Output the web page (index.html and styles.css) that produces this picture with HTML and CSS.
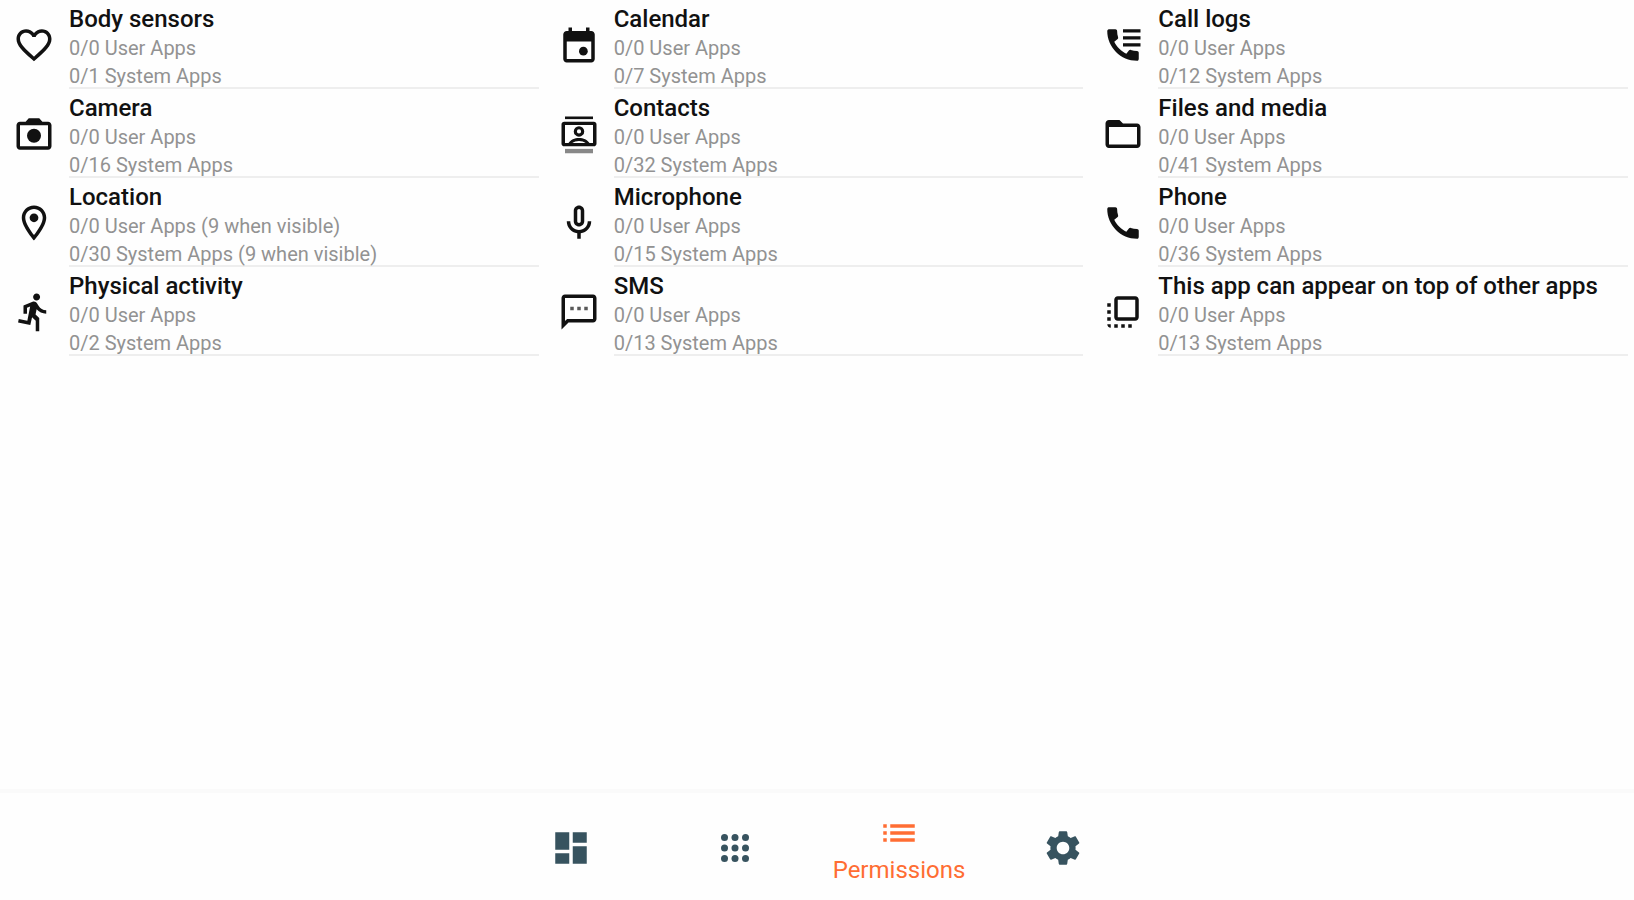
FILE: index.html
```
<!DOCTYPE html>
<html lang="en">
<head>
  <meta charset="UTF-8">
  <title>Permissions</title>
  <meta name="viewport" content="width=device-width, initial-scale=1.0">
  <link rel="stylesheet" href="styles.css">
</head>
<body>
  <main>
    <ul class="permissions">
      <li class="permission">
        <svg class="icon" viewBox="0 0 24 24"><path d="M16.5 3c-1.74 0-3.41.81-4.5 2.09C10.91 3.81 9.24 3 7.5 3 4.42 3 2 5.42 2 8.5c0 3.78 3.4 6.86 8.55 11.54L12 21.35l1.45-1.32C18.6 15.36 22 12.28 22 8.5 22 5.42 19.58 3 16.5 3zm-4.4 15.55l-.1.1-.1-.1C7.14 14.24 4 11.39 4 8.5 4 6.5 5.5 5 7.5 5c1.54 0 3.04.99 3.57 2.36h1.87C13.46 5.99 14.96 5 16.5 5c2 0 3.5 1.5 3.5 3.5 0 2.89-3.14 5.74-7.9 10.05z"/></svg>
        <div class="details">
          <h2>Body sensors</h2>
          <p>0/0 User Apps</p>
          <p>0/1 System Apps</p>
        </div>
      </li>
      <li class="permission">
        <svg class="icon" viewBox="0 0 24 24"><path d="M19 4h-1V2h-2v2H8V2H6v2H5c-1.1 0-2 .9-2 2v14c0 1.1.9 2 2 2h14c1.1 0 2-.9 2-2V6c0-1.1-.9-2-2-2zm0 16H5V10h14v10z"/><circle cx="14.5" cy="15.5" r="2.5"/></svg>
        <div class="details">
          <h2>Calendar</h2>
          <p>0/0 User Apps</p>
          <p>0/7 System Apps</p>
        </div>
      </li>
      <li class="permission">
        <svg class="icon" viewBox="0 0 24 24"><path d="M20.01 15.38c-1.23 0-2.42-.2-3.53-.56-.35-.12-.74-.03-1.01.24l-1.57 1.97c-2.83-1.35-5.48-3.9-6.89-6.83l1.95-1.66c.27-.28.35-.67.24-1.02-.37-1.11-.56-2.3-.56-3.53 0-.54-.45-.99-.99-.99H4.19C3.65 3 3 3.24 3 3.99 3 13.28 10.73 21 20.01 21c.71 0 .99-.63.99-1.18v-3.45c0-.54-.45-.99-.99-.99z"/><path d="M12 3h10v1.8H12zM12 7h10v1.8H12zM12 11h10v1.8H12z"/></svg>
        <div class="details">
          <h2>Call logs</h2>
          <p>0/0 User Apps</p>
          <p>0/12 System Apps</p>
        </div>
      </li>
      <li class="permission">
        <svg class="icon" viewBox="0 0 24 24"><path d="M20 5h-3.2L15 3H9L7.2 5H4c-1.1 0-2 .9-2 2v12c0 1.1.9 2 2 2h16c1.1 0 2-.9 2-2V7c0-1.1-.9-2-2-2zm0 14H4V7h16v12z"/><circle cx="12" cy="13" r="4"/></svg>
        <div class="details">
          <h2>Camera</h2>
          <p>0/0 User Apps</p>
          <p>0/16 System Apps</p>
        </div>
      </li>
      <li class="permission">
        <svg class="icon" viewBox="0 0 24 24"><path d="M4 2h16v1.500H4z"/><path d="M4 20.500h16V23H4z" opacity=".5"/><path d="M20.500 5h-17C2.700 5 2 5.700 2 6.500v11c0 .8.700 1.500 1.500 1.500h17c.8 0 1.500-.7 1.500-1.500v-11c0-.8-.7-1.500-1.500-1.500zM8.200 17.200c.9-.8 2.300-1.200 3.800-1.200s2.900.4 3.800 1.200zM20 17.200h-2c-1.100-1.900-3.500-2.900-6-2.900s-4.900 1-6 2.900H4V6.800h16z"/><path d="M12 7.500a3 3 0 1 0 0 6 3 3 0 0 0 0-6zm0 1.800a1.200 1.200 0 1 1 0 2.400 1.200 1.200 0 0 1 0-2.400z"/></svg>
        <div class="details">
          <h2>Contacts</h2>
          <p>0/0 User Apps</p>
          <p>0/32 System Apps</p>
        </div>
      </li>
      <li class="permission">
        <svg class="icon" viewBox="0 0 24 24"><path d="M20 6h-8l-2-2H4c-1.100 0-2 .9-2 2v12c0 1.100.9 2 2 2h16c1.100 0 2-.9 2-2V8c0-1.100-.9-2-2-2zm0 12H4V8h16v10z"/></svg>
        <div class="details">
          <h2>Files and media</h2>
          <p>0/0 User Apps</p>
          <p>0/41 System Apps</p>
        </div>
      </li>
      <li class="permission">
        <svg class="icon" viewBox="0 0 24 24"><path d="M12 2C8.130 2 5 5.130 5 9c0 5.250 7 13 7 13s7-7.750 7-13c0-3.870-3.130-7-7-7zM7 9c0-2.760 2.240-5 5-5s5 2.240 5 5c0 2.880-2.880 7.190-5 9.880C9.920 16.210 7 11.850 7 9z"/><circle cx="12" cy="9" r="2.5"/></svg>
        <div class="details">
          <h2>Location</h2>
          <p>0/0 User Apps (9 when visible)</p>
          <p>0/30 System Apps (9 when visible)</p>
        </div>
      </li>
      <li class="permission">
        <svg class="icon" viewBox="0 0 24 24"><path d="M12 14c1.660 0 3-1.340 3-3V5c0-1.660-1.340-3-3-3S9 3.340 9 5v6c0 1.660 1.340 3 3 3zm-1-9c0-.55.45-1 1-1s1 .45 1 1v6c0 .55-.45 1-1 1s-1-.45-1-1V5zm6 6c0 2.760-2.240 5-5 5s-5-2.240-5-5H5c0 3.530 2.610 6.430 6 6.920V21h2v-3.080c3.390-.49 6-3.390 6-6.920h-2z"/></svg>
        <div class="details">
          <h2>Microphone</h2>
          <p>0/0 User Apps</p>
          <p>0/15 System Apps</p>
        </div>
      </li>
      <li class="permission">
        <svg class="icon" viewBox="0 0 24 24"><path d="M20.01 15.38c-1.23 0-2.42-.2-3.53-.56-.35-.12-.74-.03-1.01.24l-1.57 1.97c-2.83-1.35-5.48-3.9-6.89-6.83l1.95-1.66c.27-.28.35-.67.24-1.02-.37-1.11-.56-2.3-.56-3.53 0-.54-.45-.99-.99-.99H4.19C3.65 3 3 3.24 3 3.99 3 13.28 10.73 21 20.01 21c.71 0 .99-.63.99-1.18v-3.45c0-.54-.45-.99-.99-.99z"/></svg>
        <div class="details">
          <h2>Phone</h2>
          <p>0/0 User Apps</p>
          <p>0/36 System Apps</p>
        </div>
      </li>
      <li class="permission">
        <svg class="icon" viewBox="0 0 24 24"><path d="M13.49 5.48c1.1 0 2-.9 2-2s-.9-2-2-2-2 .9-2 2 .9 2 2 2zm-3.6 13.9l1-4.4 2.1 2v6h2v-7.5l-2.1-2 .6-3c1.3 1.5 3.3 2.5 5.5 2.5v-2c-1.9 0-3.5-1-4.3-2.4l-1-1.6c-.4-.6-1-1-1.7-1-.3 0-.5.1-.8.1l-5.2 2.2v4.7h2v-3.4l1.8-.7-1.6 8.1-4.9-1-.4 2 7 1.4z"/></svg>
        <div class="details">
          <h2>Physical activity</h2>
          <p>0/0 User Apps</p>
          <p>0/2 System Apps</p>
        </div>
      </li>
      <li class="permission">
        <svg class="icon" viewBox="0 0 24 24"><path d="M20 2H4c-1.100 0-2 .9-2 2v18l4-4h14c1.100 0 2-.9 2-2V4c0-1.100-.9-2-2-2zm0 14H5.200L4 17.200V4h16v12z"/><path d="M7 9h2v2H7zM11 9h2v2h-2zM15 9h2v2h-2z" opacity=".7"/></svg>
        <div class="details">
          <h2>SMS</h2>
          <p>0/0 User Apps</p>
          <p>0/13 System Apps</p>
        </div>
      </li>
      <li class="permission">
        <svg class="icon" viewBox="0 0 24 24"><path d="M3 13h2v-2H3v2zm0 4h2v-2H3v2zm2 4v-2H3c0 1.100.890 2 2 2zM3 9h2V7H3v2zm12 12h2v-2h-2v2zm4-18H9c-1.110 0-2 .9-2 2v10c0 1.100.890 2 2 2h10c1.100 0 2-.9 2-2V5c0-1.100-.9-2-2-2zm0 12H9V5h10v10zm-8 6h2v-2h-2v2zm-4 0h2v-2H7v2z"/></svg>
        <div class="details">
          <h2>This app can appear on top of other apps</h2>
          <p>0/0 User Apps</p>
          <p>0/13 System Apps</p>
        </div>
      </li>
    </ul>
  </main>
  <nav>
    <a href="#overview" aria-label="Overview">
      <svg class="icon" viewBox="0 0 24 24"><path d="M3 13h8V3H3v10zm0 8h8v-6H3v6zm10 0h8V11h-8v10zm0-18v6h8V3h-8z"/></svg>
    </a>
    <a href="#apps" aria-label="Apps">
      <svg class="icon" viewBox="0 0 24 24"><circle cx="6" cy="6" r="2"/><circle cx="12" cy="6" r="2"/><circle cx="18" cy="6" r="2"/><circle cx="6" cy="12" r="2"/><circle cx="12" cy="12" r="2"/><circle cx="18" cy="12" r="2"/><circle cx="6" cy="18" r="2"/><circle cx="12" cy="18" r="2"/><circle cx="18" cy="18" r="2"/></svg>
    </a>
    <a href="#permissions" class="active">
      <svg class="icon" viewBox="0 0 24 24"><path d="M3 13h2v-2H3v2zm0 4h2v-2H3v2zm0-8h2V7H3v2zm4 4h14v-2H7v2zm0 4h14v-2H7v2zM7 7v2h14V7H7z"/></svg>
      <span>Permissions</span>
    </a>
    <a href="#settings" aria-label="Settings">
      <svg class="icon" viewBox="0 0 24 24"><path d="M19.14 12.94c.04-.3.06-.61.06-.94 0-.32-.02-.64-.07-.94l2.03-1.58c.18-.14.23-.41.12-.61l-1.92-3.32c-.12-.22-.37-.29-.59-.22l-2.39.96c-.5-.38-1.03-.7-1.62-.94l-.36-2.54c-.04-.24-.24-.41-.48-.41h-3.84c-.24 0-.43.17-.47.41l-.36 2.54c-.59.24-1.13.57-1.62.94l-2.39-.96c-.22-.08-.47 0-.59.22L2.74 8.87c-.12.21-.08.47.12.61l2.03 1.58c-.05.3-.09.63-.09.94s.02.64.07.94l-2.03 1.58c-.18.14-.23.41-.12.61l1.92 3.32c.12.22.37.29.59.22l2.39-.96c.5.38 1.03.7 1.62.94l.36 2.54c.05.24.24.41.48.41h3.84c.24 0 .44-.17.47-.41l.36-2.54c.59-.24 1.13-.56 1.62-.94l2.39.96c.22.08.47 0 .59-.22l1.92-3.32c.12-.22.07-.47-.12-.61l-2.01-1.58zM12 15.6c-1.98 0-3.6-1.62-3.6-3.6s1.62-3.6 3.6-3.6 3.6 1.62 3.6 3.6-1.62 3.6-3.6 3.6z"/></svg>
    </a>
  </nav>
</body>
</html>
```
FILE: styles.css
```
* { box-sizing: border-box; }
body { font-family: Roboto, "Liberation Sans", Arial, sans-serif; margin: 0; min-height: 100vh; display: flex; flex-direction: column; background: #fefefe; color: #111; }
main { flex: 1; }
.icon { width: 42px; height: 42px; fill: currentColor; flex: none; }

.permissions { display: grid; grid-template-columns: repeat(3, 1fr); list-style: none; margin: 0; padding: 0; }
.permission { display: flex; align-items: center; gap: 14px; padding: 0 6px 0 13px; }
.details { flex: 1; min-width: 0; padding-top: 7px; border-bottom: 2px solid #eee; }
.details h2 { margin: 0; font-size: 24px; line-height: 24px; font-weight: 500; }
.details p { margin: 6px 0 0; font-size: 20px; line-height: 22px; color: #929292; }

nav { display: flex; justify-content: center; height: 111px; padding-top: 2px; border-top: 4px solid #fafafa; color: #37535f; }
nav a { display: flex; flex-direction: column; align-items: center; justify-content: center; gap: 2px; width: 164px; color: inherit; text-decoration: none; }
nav a.active { color: #ff6d33; }
nav span { font-size: 24px; line-height: 28px; }
```
